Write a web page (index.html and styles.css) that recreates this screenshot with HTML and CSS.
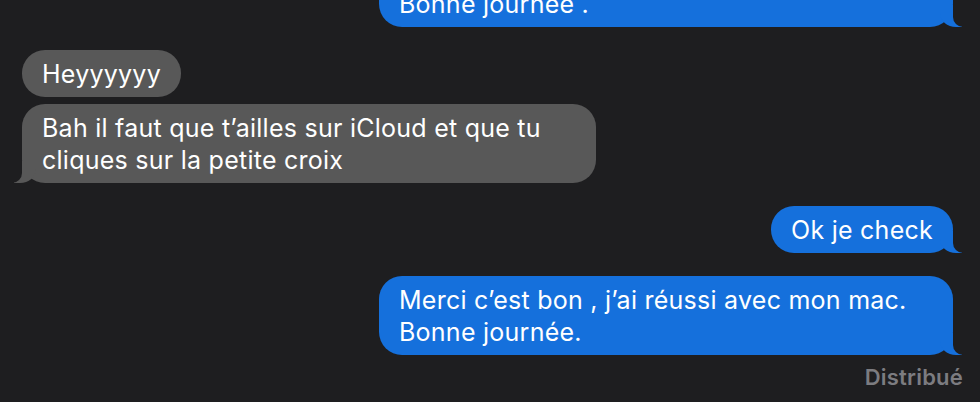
FILE: index.html
```html
<!DOCTYPE html>
<html lang="fr">
<head>
<meta charset="utf-8">
<title>Messages</title>
<link rel="stylesheet" href="styles.css">
</head>
<body>
<main class="thread">
  <div class="group group-first">
    <div class="bubble me tail">Merci pour tout , à bientôt !<br>Bonne journée .</div>
  </div>
  <div class="group">
    <div class="bubble them">Heyyyyyy</div>
    <div class="bubble them tail">Bah il faut que t’ailles sur iCloud et que tu cliques sur la petite croix</div>
  </div>
  <div class="group">
    <div class="bubble me tail">Ok je check</div>
  </div>
  <div class="group">
    <div class="bubble me tail">Merci c’est bon , j’ai réussi avec mon mac. Bonne journée.</div>
    <div class="status">Distribué</div>
  </div>
</main>
</body>
</html>
```

FILE: styles.css
```css
html, body {
  margin: 0;
  padding: 0;
  background: #1e1e20;
  height: 100%;
  overflow: hidden;
}

.thread {
  display: flex;
  flex-direction: column;
  gap: 23px;
  padding: 0 17px 0 22px;
  font-family: Inter, "Noto Sans", sans-serif;
  font-size: 25px;
  letter-spacing: 0.25px;
  color: #ffffff;
}

.group {
  display: flex;
  flex-direction: column;
  gap: 7px;
}

.group-first {
  margin-top: -52px;
}

.group-first .bubble {
  width: 534px;
}

.bubble {
  position: relative;
  max-width: 534px;
  padding: 7.5px 20px;
  line-height: 32px;
  border-radius: 23px;
}

.bubble.them {
  align-self: flex-start;
  background: #585858;
}

.bubble.me {
  align-self: flex-end;
  margin-right: 10px;
  background: #1570dc;
}

.bubble.tail::before,
.bubble.tail::after {
  content: "";
  position: absolute;
  bottom: 0;
  height: 22px;
}

.bubble.me.tail::before {
  right: -9px;
  width: 22px;
  background: #1570dc;
  border-bottom-left-radius: 16px 14px;
}

.bubble.me.tail::after {
  right: -26px;
  width: 26px;
  background: #1e1e20;
  border-bottom-left-radius: 10px;
}

.bubble.them.tail::before {
  left: -8px;
  width: 22px;
  background: #585858;
  border-bottom-right-radius: 16px 14px;
}

.bubble.them.tail::after {
  left: -26px;
  width: 26px;
  background: #1e1e20;
  border-bottom-right-radius: 10px;
}

.status {
  align-self: flex-end;
  margin-top: 2px;
  font-size: 22px;
  font-weight: 600;
  letter-spacing: 0.2px;
  line-height: 26px;
  color: #7c7c80;
}
```
